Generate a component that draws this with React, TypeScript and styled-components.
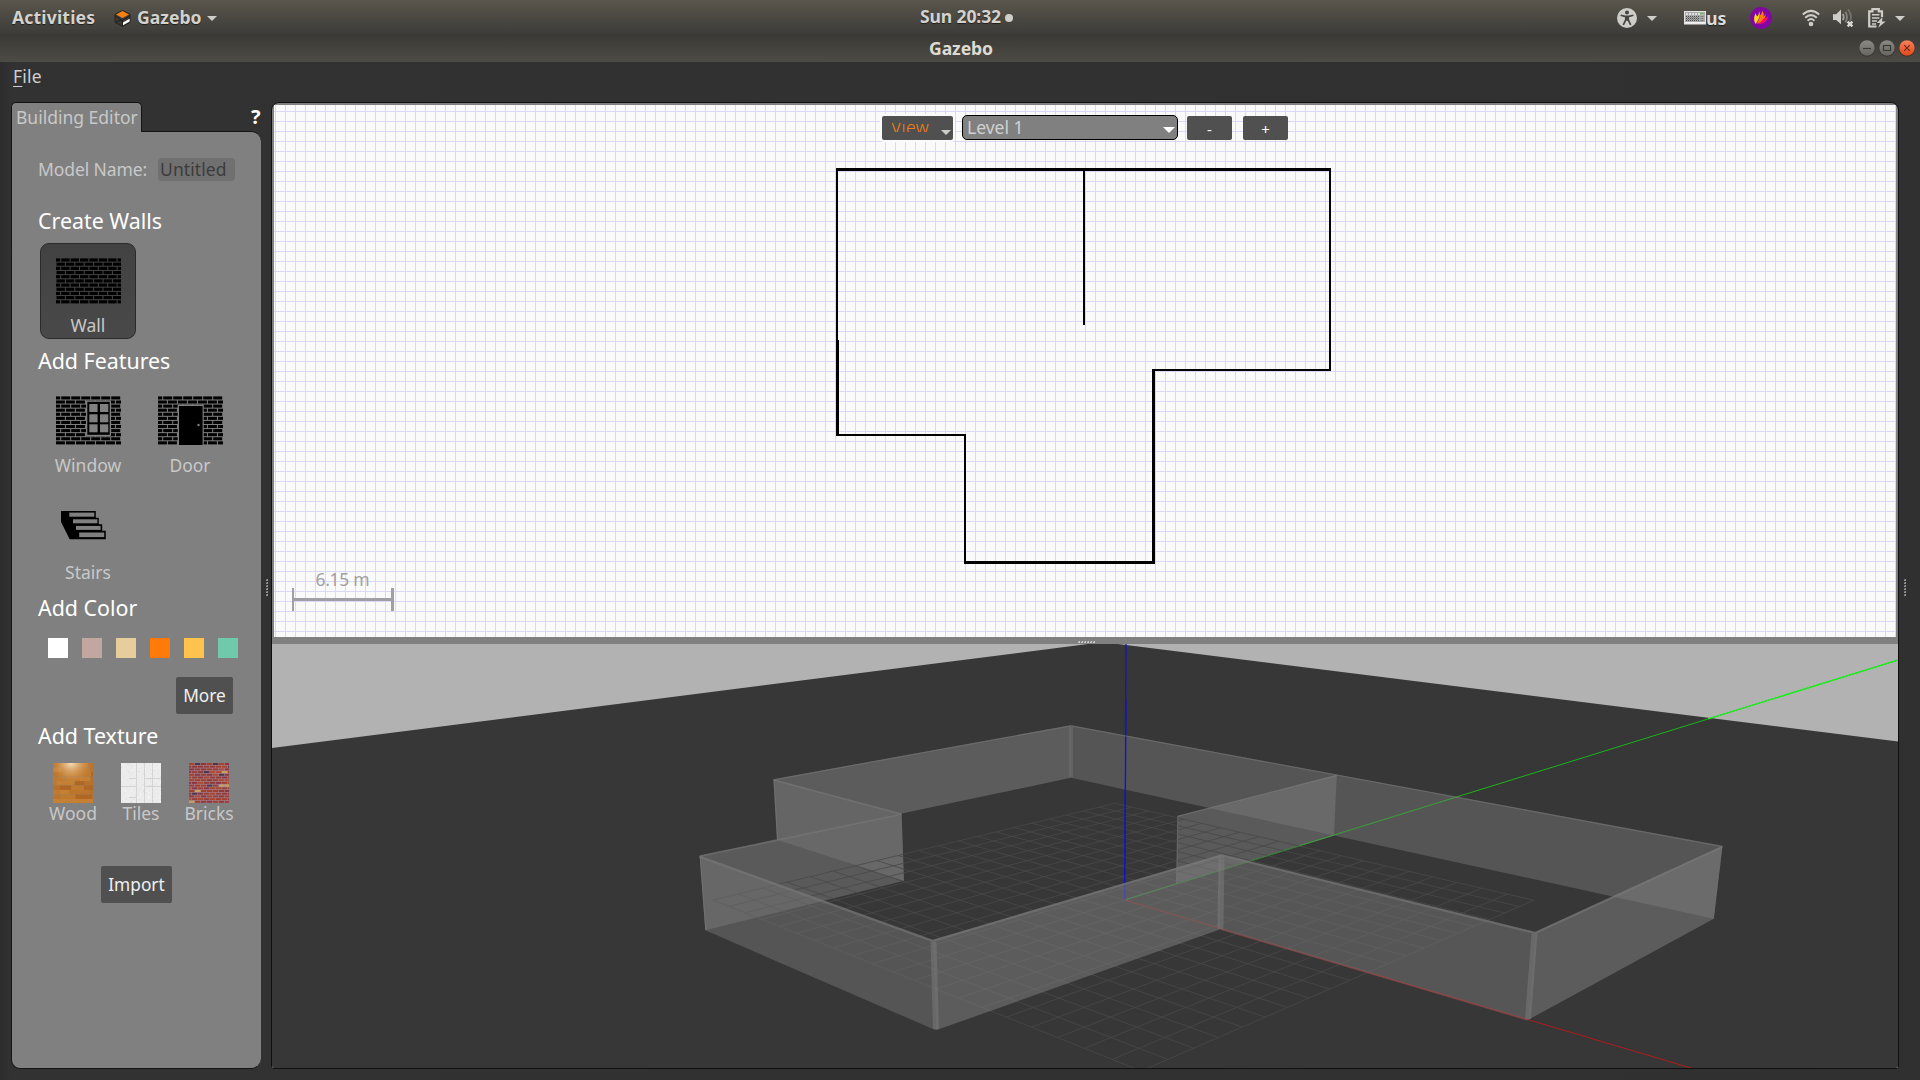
import React from "react";
import styled, { createGlobalStyle } from "styled-components";

const GlobalStyle = createGlobalStyle`
  * { box-sizing: border-box; }
  html, body { margin: 0; padding: 0; background: #303030; overflow: hidden; }
  body { font-family: "Noto Sans", "Open Sans", sans-serif; font-size: 17.5px; color: #c8c8c8; }
  svg { display: block; flex: none; }
`;

/* ---------- frame ---------- */

const Screen = styled.div`
  width: 1920px;
  height: 1080px;
  display: flex;
  flex-direction: column;
  background: linear-gradient(90deg, #2d2d2d 0, #323232 12px, #303030 100%);
`;

const TopBar = styled.header`
  height: 34px;
  flex: none;
  display: grid;
  grid-template-columns: 1fr auto 1fr;
  align-items: center;
  background: linear-gradient(#5a564d, #3d3c38);
  font-weight: 700;
  font-size: 17.6px;
  line-height: 32px;
  color: #d4d2cd;
  text-shadow: 0 1px 1px rgba(0, 0, 0, 0.55);
`;

const BarLeft = styled.div`
  display: flex;
  align-items: center;
  padding-left: 12px;
`;

const BarText = styled.span<{ $w: number; $ls?: number }>`
  width: ${(p) => p.$w}px;
  height: 34px;
  letter-spacing: ${(p) => p.$ls ?? 0}px;
  white-space: nowrap;
`;

const AppName = styled.div`
  display: flex;
  align-items: center;
  margin-left: 18px;
  gap: 6px;
`;

const Clock = styled.div`
  display: flex;
  align-items: center;
  justify-content: center;
  gap: 4px;
  padding-left: 13px;
`;

const ClockText = styled.span`
  height: 34px;
  letter-spacing: -0.15px;
  line-height: 31px;
`;

const Dot = styled.i`
  width: 8px;
  height: 8px;
  border-radius: 50%;
  background: #d0cec9;
`;

const Caret = styled.i<{ $m?: string }>`
  width: 0;
  height: 0;
  margin: ${(p) => p.$m ?? "0"};
  border: 5px solid transparent;
  border-top-color: #cfcdc8;
  border-bottom-width: 0;
`;

const Tray = styled.div`
  display: flex;
  align-items: center;
  justify-content: flex-end;
  padding-right: 15px;
`;

const Layout = styled.span`
  width: 20px;
  height: 34px;
  margin: 2px 24px 0 0;
  font-family: "Noto Sans", sans-serif;
  font-size: 17.8px;
  color: #dcdcdc;
`;

const TitleBar = styled.div`
  height: 28px;
  flex: none;
  display: grid;
  grid-template-columns: 1fr auto 1fr;
  align-items: center;
  padding: 0 5px 0 7px;
  background: linear-gradient(#3a3935, #4c4b44);
  font-size: 17.6px;
  font-weight: 700;
  line-height: 28px;
  color: #dfdbd2;
`;

const WindowButtons = styled.div`
  grid-column: 3;
  display: flex;
  justify-content: flex-end;
  gap: 4px;
`;

const WindowTitle = styled.span`
  grid-column: 2;
  letter-spacing: -0.1px;
`;

const MenuBar = styled.nav`
  height: 40px;
  flex: none;
  padding: 1px 0 0 13px;
  line-height: 26px;
  letter-spacing: 0.2px;
  color: #cfcfcf;
`;

const Mnemonic = styled.u`
  text-decoration-thickness: 1px;
  text-underline-offset: 3px;
`;

const Workspace = styled.main`
  flex: 1;
  min-height: 0;
  display: flex;
`;

/* ---------- palette ---------- */

const Sidebar = styled.aside`
  width: 250px;
  margin-left: 11px;
  height: 967px;
  display: flex;
  flex-direction: column;
`;

const TabRow = styled.div`
  height: 30px;
  display: flex;
  justify-content: space-between;
`;

const Tab = styled.div`
  width: 131px;
  height: 30px;
  margin-bottom: -1px;
  position: relative;
  z-index: 1;
  padding-left: 4px;
  border: 1px solid #141414;
  border-bottom: 0;
  border-radius: 5px 5px 0 0;
  background: #808080;
  line-height: 29px;
  white-space: nowrap;
`;

const Help = styled.span`
  width: 10px;
  font-weight: 700;
  font-size: 20px;
  line-height: 30px;
  color: #fff;
`;

const Panel = styled.section`
  flex: 1;
  position: relative;
  margin-top: -1px;
  padding: 26px 0 0 28px;
  background: #808080;
  border: 1px solid #141414;
  border-right: 0;
  border-radius: 0 10px 10px 9px;
`;

const NameRow = styled.div`
  display: flex;
  height: 24px;
  margin-left: -2px;
  line-height: 23px;
`;

const NameLabel = styled.label`
  width: 120px;
  letter-spacing: -0.1px;
`;

const NameField = styled.div`
  width: 77px;
  height: 23px;
  padding-left: 2px;
  border-radius: 4px;
  background: #707070;
  color: #3c3c3c;
  letter-spacing: 0.1px;
`;

const Heading = styled.h2<{ $top: number }>`
  margin: ${(p) => p.$top}px 0 0 -2px;
  height: 28px;
  font-size: 21.4px;
  font-weight: 400;
  line-height: 28px;
  color: #fff;
`;

const ToolRow = styled.div<{ $top: number }>`
  display: flex;
  gap: 6px;
  margin-top: ${(p) => p.$top}px;
`;

const Tool = styled.div<{ $active?: boolean; $pad: number }>`
  width: 96px;
  height: 96px;
  display: flex;
  flex-direction: column;
  align-items: center;
  border-radius: 9px;
  border: 1px solid ${(p) => (p.$active ? "#2a2a2a" : "transparent")};
  background: ${(p) => (p.$active ? "linear-gradient(#424242, #494949)" : "transparent")};
  padding-top: ${(p) => p.$pad}px;
`;

const ToolLabel = styled.span`
  margin-top: auto;
  height: 23px;
  line-height: 20px;
`;

const Swatches = styled.div`
  display: flex;
  gap: 14px;
  margin: 16px 0 0 8px;
`;

const Swatch = styled.i<{ $c: string }>`
  width: 20px;
  height: 20px;
  background: ${(p) => p.$c};
`;

const PushButton = styled.div<{ $w: number; $m: string }>`
  width: ${(p) => p.$w}px;
  height: 37px;
  margin: ${(p) => p.$m};
  border-radius: 2px;
  background: #505050;
  color: #f0f0f0;
  font-size: 17.3px;
  line-height: 37.5px;
  text-align: center;
`;

const Textures = styled.div`
  display: flex;
  margin: 13px 0 0 -1px;
`;

const Texture = styled.div`
  width: 68px;
  display: flex;
  flex-direction: column;
  align-items: center;
  line-height: 20px;
`;

/* ---------- views ---------- */

const Splitter = styled.div<{ $w: number; $pad?: number }>`
  width: ${(p) => p.$w}px;
  display: flex;
  flex-direction: column;
  align-items: center;
  padding: 477px 0 0 ${(p) => p.$pad ?? 0}px;
  gap: 1px;
`;

const Grip = styled.i`
  width: 2px;
  height: 2px;
  background: linear-gradient(135deg, #666 50%, #949494 50%);
`;

const Views = styled.div`
  width: 1628px;
  height: 967px;
  display: flex;
  flex-direction: column;
  border: 1px solid #101010;
  border-radius: 8px 8px 3px 3px;
  overflow: hidden;
  background: #808080;
`;

const PlanView = styled.div`
  height: 532px;
  flex: none;
  margin: 2px 2px 0;
  display: grid;
  background-color: #fafafa;
  background-image: linear-gradient(90deg, #dad8f8 1px, transparent 1px),
    linear-gradient(#dad8f8 1px, transparent 1px);
  background-size: 10px 10px;
  background-position: 1px 0, 0 6px;
  > * { grid-area: 1 / 1; }
`;

const PlanTools = styled.div`
  display: flex;
  align-items: flex-start;
  justify-content: flex-start;
  padding: 9px 0 0 606px;
`;

const ViewButton = styled.div`
  width: 75px;
  height: 28px;
  border: 2px solid #fafafa;
  border-radius: 4px;
  background: #505050;
  display: flex;
  padding: 7px 2px 0 9px;
  justify-content: space-between;
`;

const ClippedText = styled.span`
  height: 9px;
  overflow: hidden;
  line-height: 9px;
  color: #f58113;
  font-weight: 300;
  font-size: 17.5px;
  letter-spacing: 0.4px;
`;

const LevelSelect = styled.div`
  width: 216px;
  height: 25px;
  margin: 1px 9px 0 7px;
  display: flex;
  align-items: center;
  justify-content: space-between;
  padding: 0 2px 0 4px;
  border: 1px solid #000;
  border-radius: 5px;
  background: #808080;
  line-height: 23px;
  color: #d0d0d0;
`;

const SelectCaret = styled.i`
  margin-top: 4px;
  border: 6px solid transparent;
  border-top-color: #fff;
  border-bottom-width: 0;
`;

const LevelButton = styled.div`
  width: 45px;
  height: 24px;
  margin: 2px 11px 0 0;
  border-radius: 2px;
  background: #505050;
  color: #fff;
  font-size: 15px;
  line-height: 26px;
  text-align: center;
`;

const HandleBar = styled.div`
  height: 7px;
  flex: none;
  display: flex;
  justify-content: center;
  align-items: flex-end;
  padding: 0 0 1px 2px;
  gap: 1px;
`;

const LightGrip = styled.i`
  width: 2px;
  height: 2px;
  background: linear-gradient(135deg, #999 50%, #ccc 50%);
`;

/* ---------- drawings ---------- */

function Bricks({ w, h, rows, pitch }: { w: number; h: number; rows: number; pitch: number }) {
  const rowH = h / rows;
  const out: React.ReactElement[] = [];
  for (let r = 0; r < rows; r++) {
    const first = (r % 2 === 0 ? 4.7 : 9.4) - pitch;
    for (let i = 0; first + i * pitch < w; i++) {
      const x0 = Math.max(0, first + i * pitch + 0.5);
      const x1 = Math.min(w, first + (i + 1) * pitch - 0.5);
      if (x1 > x0)
        out.push(<rect key={`${r}-${i}`} x={x0} y={r * rowH + 0.4} width={x1 - x0} height={rowH - 1} />);
    }
  }
  return <g fill="#000">{out}</g>;
}

const WallIcon = () => (
  <svg width="65" height="46">
    <Bricks w={65} h={46} rows={11} pitch={9.4} />
  </svg>
);

const WindowIcon = () => (
  <svg width="65" height="49">
    <Bricks w={65} h={49} rows={12} pitch={10} />
    <rect x="30" y="4.5" width="25" height="35.5" fill="#808080" />
    <rect x="31.3" y="5.8" width="22.4" height="33" />
    {[8, 18.3, 28.3].map((y) =>
      [33.3, 44].map((x) => <rect key={`${x}${y}`} x={x} y={y} width="8.3" height="8" fill="#808080" />)
    )}
  </svg>
);

const DoorIcon = () => (
  <svg width="65" height="49">
    <Bricks w={65} h={49} rows={12} pitch={10} />
    <rect x="19.7" y="8.6" width="26" height="40.4" fill="#808080" />
    <rect x="21" y="10" width="23.6" height="39" />
    <circle cx="40.5" cy="29" r="1.2" fill="#808080" />
  </svg>
);

const StairsIcon = () => (
  <svg width="54" height="29">
    <path d="M0 0H34.8V6.7H37.8V13.3H41.2V19.8H44.8V28.2H8.7L0 11Z" />
    <g fill="#808080">
      <rect x="8.3" y="1.6" width="25" height="4.1" />
      <rect x="12" y="8.3" width="24.4" height="4" />
      <rect x="15" y="14.9" width="24.6" height="4" />
      <rect x="18.2" y="21.5" width="25" height="4.6" />
    </g>
  </svg>
);

const noise = (n: number) => {
  const v = Math.sin(n * 127.1 + 11.7) * 43758.5453;
  return v - Math.floor(v);
};

const WoodTexture = () => {
  const tones = ["#b97029", "#c07a30", "#b06724", "#bd752b", "#c58034"];
  const planks: React.ReactElement[] = [];
  for (let r = 0; r < 9; r++) {
    let x = -noise(r) * 12;
    for (let i = 0; x < 40; i++) {
      const w = 8 + noise(r * 7 + i) * 10;
      planks.push(<rect key={`${r}${i}`} x={x} y={r * 4.5} width={w} height="4.5" fill={tones[Math.floor(noise(r * 13 + i * 5) * 5)]} />);
      x += w;
    }
  }
  return (
    <svg width="40" height="40">
      <defs>
        <radialGradient id="shine" cx="0.45" cy="0" r="0.5">
          <stop offset="0" stopColor="#fbe3c0" stopOpacity="0.95" />
          <stop offset="1" stopColor="#d99a50" stopOpacity="0" />
        </radialGradient>
      </defs>
      {planks}
      <rect width="40" height="40" fill="url(#shine)" />
    </svg>
  );
};

const TilesTexture = () => (
  <svg width="40" height="40">
    <rect width="40" height="40" fill="#ececec" />
    {Array.from({ length: 110 }, (_, i) => (
      <rect key={i} x={Math.floor(noise(i) * 40)} y={Math.floor(noise(i + 300) * 40)} width="1" height="1" fill={i % 3 ? "#e0e0e0" : "#f6f6f6"} />
    ))}
    <path d="M15.5 0V40M23.5 0V40M31.5 0V40M8 15.5H15M0 23.5H15M8 34.5H15M24 15.5H40M24 23.5H40" stroke="#d4d4d4" fill="none" />
  </svg>
);

const BricksTexture = () => {
  const tones = ["#a2402e", "#8f3a38", "#b04a32", "#94403c", "#a8452f", "#8b3644", "#4a3750", "#c9a25a"];
  const cells: React.ReactElement[] = [];
  for (let r = 0; r < 15; r++) {
    for (let i = 0; i < 8; i++) {
      const n = noise(r * 17 + i * 3.3);
      const tone = n > 0.96 ? 7 : n > 0.87 ? 6 : Math.floor(n * 6.8);
      cells.push(<rect key={`${r}-${i}`} x={i * 6 - (r % 2) * 3} y={r * 2.7} width="5.4" height="2" fill={tones[tone]} />);
    }
  }
  return (
    <svg width="40" height="40">
      <rect width="40" height="40" fill="#a5808c" />
      {cells}
    </svg>
  );
};

const GazeboLogo = () => (
  <svg width="17" height="17" viewBox="0 0 17 17">
    <path d="M8.5 0.6L16 4.4V12.4L8.5 16.4L1 12.4V4.4Z" fill="#3b3936" stroke="#26241f" strokeWidth="1" />
    <path d="M8.5 1L15 4.4L8.5 7.9L2 4.4Z" fill="#f58113" />
    <path d="M1.5 6L8 10.5L15.5 6.4M8.3 10V16M2 12L8 9.7" stroke="#201e1a" fill="none" />
    <path d="M9 12.4L15.6 8.7V11.6L9 15.2Z" fill="#fff" />
  </svg>
);

const AccessIcon = () => (
  <svg width="20" height="20" viewBox="0 0 20 20">
    <circle cx="10" cy="10" r="10" fill="#cfcdc8" />
    <circle cx="10" cy="4.6" r="2" fill="#45443f" />
    <path d="M3.6 7.2L8 8.3H12L16.4 7.2M9.2 8L8.6 12L6.3 17M10.8 8L11.4 12L13.7 17" stroke="#45443f" strokeWidth="1.7" fill="none" />
    <path d="M8 8H12V12.8H8Z" fill="#45443f" />
  </svg>
);

const KeyboardIcon = () => (
  <svg width="22" height="14" viewBox="0 0 22 14">
    <rect x="0.5" y="0.5" width="21" height="12.5" fill="#aaa" stroke="#e4e4e4" />
    <path d="M2 3H20" stroke="#eee" strokeWidth="1.4" strokeDasharray="2 1" />
    <path d="M2 5.5H15M2 7.5H15M2 9.5H15" stroke="#4c4c4c" strokeDasharray="1 1" />
    <path d="M3 6.5H15M3 8.5H15" stroke="#777" strokeDasharray="1 1" />
    <path d="M16.5 5.5H20M16.5 7.5H20M16.5 9.5H20" stroke="#666" strokeDasharray="1 .7" />
    <rect x="16.5" y="2" width="2.5" height="1.4" fill="#54c04c" />
    <rect x="1" y="11" width="20" height="1.8" fill="#f2f2f2" />
  </svg>
);

const FlameIcon = () => (
  <svg width="22" height="22" viewBox="0 0 22 22">
    <circle cx="11" cy="11" r="11" fill="#8206a2" />
    <path d="M5.6 17C3.3 13 4 9 5.8 6.2C6.2 8 6.6 8.8 7.4 9.4C8.6 7.8 9.1 6.2 9 4.3C11 8.5 8.4 13.5 5.6 17Z" fill="#ffd21c" />
    <path d="M6.6 17C8.5 14 9.7 11.8 9.6 8.8C11.4 7.3 12.1 5.6 12.2 3.7C14 6.2 14.1 8 13.4 9.8C14.6 9 15.2 8 15.3 6.8C17 10.8 11.6 15.2 6.6 17Z" fill="#ff7a0c" />
    <path d="M7.4 17.1C10.4 16 12.4 13.8 13.4 11.5C14.6 11.6 16.3 10.8 17.7 9.3C18.3 13.8 13 17.6 7.4 17.1Z" fill="#ff0d63" />
  </svg>
);

const WifiIcon = () => (
  <svg width="18" height="18" viewBox="0 0 18 18" fill="none" stroke="#cfcdc8">
    <path d="M0.8 5.6Q9 -1.8 17.2 5.6" strokeWidth="2" />
    <path d="M3.2 8.8Q9 3.4 14.8 8.8" strokeWidth="2" />
    <path d="M5.6 11.7Q9 8.4 12.4 11.7" strokeWidth="1.9" />
    <circle cx="9" cy="15" r="2.3" fill="#cfcdc8" stroke="none" />
  </svg>
);

const VolumeIcon = () => (
  <svg width="21" height="20" viewBox="0 0 21 20" fill="none">
    <path d="M0 6.2H3.2L8 1.6V16.2L3.2 12H0Z" fill="#cfcdc8" />
    <path d="M9.8 5.8Q11.7 9 9.8 12.2" stroke="#aaa8a2" strokeWidth="1.6" />
    <path d="M12.4 3.6Q15.6 9 12.4 14.4" stroke="#85837d" strokeWidth="1.8" />
    <path d="M15 1.2Q20 8 16.8 13" stroke="#74726c" strokeWidth="1.8" />
    <path d="M14.6 13.6L19.4 18.4M19.4 13.6L14.6 18.4" stroke="#dddbd6" strokeWidth="2.2" />
  </svg>
);

const BatteryIcon = () => (
  <svg width="18" height="20" viewBox="0 0 18 20" fill="none">
    <path d="M8.5 18.5H1.2V3.4H4.4V1.2H10.8V3.4H14V9" stroke="#cfcdc8" strokeWidth="2.2" />
    <path d="M4 6.8H11.4M4 10H11.4M4 13H9M4 16H8" stroke="#cfcdc8" strokeWidth="1.5" />
    <path d="M14.5 9L8.8 15H12.2L10.2 19.8L17.6 13.6H14Z" fill="#cfcdc8" />
  </svg>
);

function WindowButton({ kind }: { kind: "min" | "max" | "close" }) {
  const close = kind === "close";
  return (
    <svg width="16" height="17" viewBox="0 0 16 17">
      <defs>
        <linearGradient id={kind} x2="0" y2="1">
          <stop offset="0" stopColor={close ? "#f5825c" : "#8b8a84"} />
          <stop offset="1" stopColor={close ? "#df4a1a" : "#66655f"} />
        </linearGradient>
      </defs>
      <circle cx="8" cy="8.6" r="8" fill="#2f2e2a" />
      <circle cx="8" cy="8" r="7.7" fill={`url(#${kind})`} />
      <g stroke={close ? "#6d2a14" : "#3b3a36"} strokeWidth="1.2" fill="none">
        {kind === "min" && <path d="M4 8.5H12" />}
        {kind === "max" && <rect x="4.5" y="5.5" width="7" height="5" />}
        {close && <path d="M5.2 5.2L10.8 10.8M10.8 5.2L5.2 10.8" />}
      </g>
    </svg>
  );
}

/* Wall footprint of Level 1, as [x, y, width, height] in screen pixels */
const planWalls = [
  [836, 168, 495, 3],
  [836, 168, 2, 268],
  [836, 340, 3, 96],
  [836, 434, 130, 2],
  [964, 434, 2, 130],
  [964, 561, 191, 3],
  [1152, 369, 3, 195],
  [1152, 369, 179, 2],
  [1329, 168, 2, 203],
  [1083, 171, 2, 154],
];

const FloorPlan = () => (
  <svg width="1622" height="532" viewBox="274 105 1622 532" shapeRendering="crispEdges">
    {planWalls.map(([x, y, w, h], i) => (
      <rect key={i} x={x} y={y} width={w} height={h} />
    ))}
    <g fill="#a0a0a4">
      <rect x="292" y="588" width="2" height="23" />
      <rect x="391" y="588" width="3" height="23" />
      <rect x="292" y="598" width="102" height="3" />
      <text x="315.5" y="586" fontSize="17.5" textLength="54">6.15 m</text>
    </g>
  </svg>
);

type P = [number, number];

/* Maps the unit square onto the four projected corners of the ground grid */
function groundProjection(p0: P, p1: P, p2: P, p3: P) {
  const sx = p0[0] - p1[0] + p2[0] - p3[0];
  const sy = p0[1] - p1[1] + p2[1] - p3[1];
  const dx1 = p1[0] - p2[0], dx2 = p3[0] - p2[0];
  const dy1 = p1[1] - p2[1], dy2 = p3[1] - p2[1];
  const det = dx1 * dy2 - dx2 * dy1;
  const g = (sx * dy2 - dx2 * sy) / det;
  const h = (dx1 * sy - sx * dy1) / det;
  return (u: number, v: number) => {
    const w = g * u + h * v + 1;
    const x = ((p1[0] - p0[0] + g * p1[0]) * u + (p3[0] - p0[0] + h * p3[0]) * v + p0[0]) / w;
    const y = ((p1[1] - p0[1] + g * p1[1]) * u + (p3[1] - p0[1] + h * p3[1]) * v + p0[1]) / w;
    return `${x.toFixed(2)} ${y.toFixed(2)}`;
  };
}

const project = groundProjection([713, 900], [1115, 803.3], [1533.8, 900.3], [1141.2, 1071]);
const gridPath = Array.from({ length: 21 }, (_, i) => i / 20)
  .map((t) => `M${project(t, 0)}L${project(t, 1)}M${project(0, t)}L${project(1, t)}`)
  .join("");

const Wall = ({ d, tone }: { d: string; tone: number }) => (
  <path d={d} fill={`rgb(${tone},${tone},${tone})`} fillOpacity="0.5" />
);

const Scene = () => (
  <svg width="1626" height="424" viewBox="272 644 1626 424">
    <rect x="272" y="644" width="1626" height="424" fill="#b2b2b2" />
    <path d="M272 748L1088 644H1118L1898 741.5V1068H272Z" fill="#373737" />
    <path d="M1124.5 900L1898 660" stroke="#1bb41b" strokeWidth="1" fill="none" />
    <path d="M1708 719L1898 660" stroke="#18f518" strokeWidth="1.3" fill="none" />
    <path d="M1124.5 900L1691 1068" stroke="#b01c1c" strokeWidth="1" fill="none" />
    <path d="M1126 644L1124.6 900" stroke="#1712c4" strokeWidth="1.3" fill="none" />

    <Wall tone={129} d="M1071 725.3L773.5 779.3L777 839.8L1071 777.8Z" />
    <Wall tone={115} d="M1071 725.3L1722.5 846L1713.8 918.7L1071 777.8Z" />
    <Wall tone={110} d="M773.5 779.3L901.6 813.7L904 880.7L777 839.8Z" />
    <Wall tone={125} d="M1336.8 774.7L1177.6 815.7L1176.3 883.3L1334 835.7Z" />
    <Wall tone={125} d="M901.6 813.7L699.6 855.7L705.3 930.3L904 880.7Z" />
    <path d={gridPath} stroke="#484848" strokeOpacity="0.8" strokeWidth="1" fill="none" />
    <path d="M1124.5 900L1457 797" stroke="#2fa02f" strokeOpacity="0.45" fill="none" />
    <path d="M1126 700L1124.6 900" stroke="#1712c4" strokeWidth="1.3" fill="none" />

    <Wall tone={115} d="M699.6 855.7L932.7 940L935.9 1030.3L705.3 930.3Z" />
    <Wall tone={129} d="M932.7 940L1221.6 854.3L1220.4 929.3L935.9 1030.3Z" />
    <Wall tone={117} d="M1221.6 854.3L1535.2 932L1527.9 1020L1220.4 929.3Z" />
    <Wall tone={129} d="M1535.2 932L1722.5 846L1713.8 918.7L1527.9 1020Z" />

    <g fill="none" stroke="#7c7c7c" strokeOpacity="0.5">
      <path d="M773.5 779.8L1071 725.8L1722.5 846.5M1336.8 775.5L1177.6 816.3" strokeWidth="1.3" />
      <path d="M773.5 780L901.6 814.2L699.6 856.2" strokeWidth="1.8" />
      <path d="M699.6 856.7L932.7 941L1221.6 855.4L1535.2 933L1722 847" strokeWidth="2.4" />
      <path d="M1071 727V777.5" strokeWidth="4" strokeOpacity="0.35" />
      <path d="M933.5 942L936 1029M1221.5 856.5L1220.4 929M1534.5 934L1528 1019" strokeWidth="6" />
      <path d="M774 780L777.5 839.5M700.3 857L705.8 930M1177.8 816L1176.6 883" strokeWidth="1" />
    </g>
    <path d="M1220.4 929.3L1527.9 1020.3" stroke="#874848" strokeWidth="0.8" />
    <path d="M1124.5 900L1220.4 928.6" stroke="#8a4e4e" strokeWidth="0.6" />
  </svg>
);

const swatches = ["#ffffff", "#c1a79f", "#e8cd9c", "#ff7a08", "#ffc34e", "#70c9ab"];

const StatusGroup = styled.div`
  display: flex;
  align-items: center;
  margin-left: 30px;
`;

const Gap = styled.i<{ $w: number }>`
  width: ${(p) => p.$w}px;
`;

function TrayIcons() {
  return (
    <StatusGroup>
      <WifiIcon />
      <Gap $w={13} />
      <VolumeIcon />
      <Gap $w={14} />
      <BatteryIcon />
      <Gap $w={9} />
      <Caret />
    </StatusGroup>
  );
}

export default function App() {
  return (
    <Screen>
      <GlobalStyle />
      <TopBar>
        <BarLeft>
          <BarText $w={84} $ls={0.15}>Activities</BarText>
          <AppName>
            <GazeboLogo />
            <BarText $w={66} $ls={0}>Gazebo</BarText>
            <Caret $m="0 0 0 -2px" />
          </AppName>
        </BarLeft>
        <Clock>
          <ClockText>Sun 20:32</ClockText>
          <Dot />
        </Clock>
        <Tray>
          <AccessIcon />
          <Caret $m="0 27px 0 10px" />
          <KeyboardIcon />
          <Layout>us</Layout>
          <FlameIcon />
          <TrayIcons />
        </Tray>
      </TopBar>
      <TitleBar>
        <WindowTitle>Gazebo</WindowTitle>
        <WindowButtons>
          <WindowButton kind="min" />
          <WindowButton kind="max" />
          <WindowButton kind="close" />
        </WindowButtons>
      </TitleBar>
      <MenuBar>
        <Mnemonic>F</Mnemonic>ile
      </MenuBar>
      <Workspace>
        <Sidebar>
          <TabRow>
            <Tab>Building Editor</Tab>
            <Help>?</Help>
          </TabRow>
          <Panel>
            <NameRow>
              <NameLabel>Model Name:</NameLabel>
              <NameField>Untitled</NameField>
            </NameRow>
            <Heading $top={25}>Create Walls</Heading>
            <ToolRow $top={8}>
              <Tool $active $pad={14}>
                <WallIcon />
                <ToolLabel>Wall</ToolLabel>
              </Tool>
            </ToolRow>
            <Heading $top={8}>Add Features</Heading>
            <ToolRow $top={8}>
              <Tool $pad={12}>
                <WindowIcon />
                <ToolLabel>Window</ToolLabel>
              </Tool>
              <Tool $pad={12}>
                <DoorIcon />
                <ToolLabel>Door</ToolLabel>
              </Tool>
            </ToolRow>
            <ToolRow $top={11}>
              <Tool $pad={20}>
                <StairsIcon />
                <ToolLabel>Stairs</ToolLabel>
              </Tool>
            </ToolRow>
            <Heading $top={8}>Add Color</Heading>
            <Swatches>
              {swatches.map((c) => (
                <Swatch key={c} $c={c} />
              ))}
            </Swatches>
            <PushButton $w={57} $m="19px 0 0 136px">More</PushButton>
            <Heading $top={8}>Add Texture</Heading>
            <Textures>
              <Texture>
                <WoodTexture />
                Wood
              </Texture>
              <Texture>
                <TilesTexture />
                Tiles
              </Texture>
              <Texture>
                <BricksTexture />
                Bricks
              </Texture>
            </Textures>
            <PushButton $w={71} $m="43px 0 0 61px">Import</PushButton>
          </Panel>
        </Sidebar>
        <Splitter $w={10} $pad={2}>
          {[0, 1, 2, 3, 4, 5].map((i) => (
            <Grip key={i} />
          ))}
        </Splitter>
        <Views>
          <PlanView>
            <FloorPlan />
            <PlanTools>
              <ViewButton>
                <ClippedText>View</ClippedText>
                <Caret $m="7px 0 0" />
              </ViewButton>
              <LevelSelect>
                Level 1
                <SelectCaret />
              </LevelSelect>
              <LevelButton>-</LevelButton>
              <LevelButton>+</LevelButton>
            </PlanTools>
          </PlanView>
          <HandleBar>
            {[0, 1, 2, 3, 4, 5].map((i) => (
              <LightGrip key={i} />
            ))}
          </HandleBar>
          <Scene />
        </Views>
        <Splitter $w={12}>
          {[0, 1, 2, 3, 4, 5].map((i) => (
            <Grip key={i} />
          ))}
        </Splitter>
      </Workspace>
    </Screen>
  );
}
